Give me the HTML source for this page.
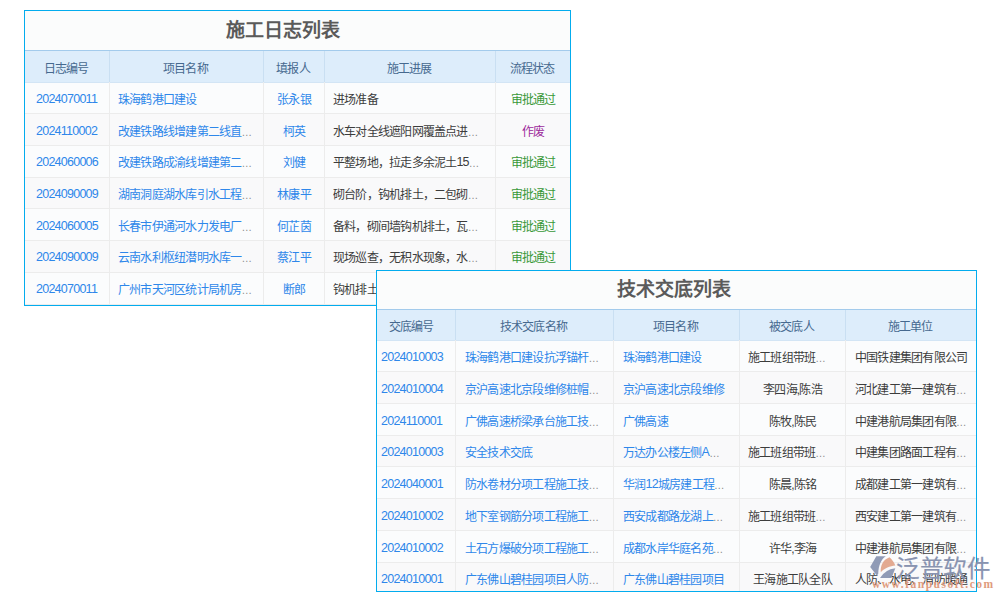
<!DOCTYPE html>
<html lang="zh-CN"><head><meta charset="utf-8">
<style>
html,body{margin:0;padding:0;background:#fff;width:1000px;height:600px;overflow:hidden;position:relative;font-family:"Liberation Sans",sans-serif}
.pn{position:absolute;border:1px solid #03acee;background:#fbfcfc}
.ttl{position:absolute;font-size:19px;font-weight:bold;color:#5a5a5a;white-space:nowrap;line-height:24px}
.hd{position:absolute;background:#ddedfb;border-top:1px solid #a3cbec;border-bottom:1px solid #d3e5f5;box-sizing:border-box}
.rw{position:absolute}
.hl{position:absolute;height:1px;background:#ececec}
.vh{position:absolute;width:1px;background:#c9dff2}
.vl{position:absolute;width:1px;background:#ececec}
.ht{position:absolute;font-size:12px;letter-spacing:-0.78px;color:#46698f;text-align:center;white-space:nowrap}
.ct{position:absolute;font-size:12px;letter-spacing:-0.78px;white-space:nowrap;overflow:hidden}
.e{font-size:10.5px;letter-spacing:0;color:#8c8c8c}
.d{font-size:12.5px;letter-spacing:-0.75px;position:relative;top:-1px}
.wmt{position:absolute;left:896px;top:551.5px;font-size:23.5px;font-weight:500;letter-spacing:0.6px;line-height:34px;color:#8893b0;-webkit-text-stroke:0.2px #8893b0;white-space:nowrap;opacity:1}
.wmu{position:absolute;left:872px;top:576px;font-family:"Liberation Serif",serif;font-weight:bold;font-size:11.5px;line-height:16px;letter-spacing:1.5px;color:#e09b7d;white-space:nowrap;opacity:1}
</style></head><body>
<div id="w1">
<div class="pn" style="left:24px;top:10px;width:545px;height:294px"></div>
<div class="ttl" style="left:225.5px;top:18.5px">施工日志列表</div>
<div class="hd" style="left:25px;top:50px;width:545px;height:33px"></div>
<div class="rw" style="left:25px;top:82.60px;width:545px;height:31.72px;background:#fbfcfd"></div>
<div class="rw" style="left:25px;top:114.32px;width:545px;height:31.72px;background:#f9f9fa"></div>
<div class="rw" style="left:25px;top:146.04px;width:545px;height:31.72px;background:#fbfcfd"></div>
<div class="rw" style="left:25px;top:177.76px;width:545px;height:31.72px;background:#f9f9fa"></div>
<div class="rw" style="left:25px;top:209.48px;width:545px;height:31.72px;background:#fbfcfd"></div>
<div class="rw" style="left:25px;top:241.20px;width:545px;height:31.72px;background:#f9f9fa"></div>
<div class="rw" style="left:25px;top:272.92px;width:545px;height:31.72px;background:#fbfcfd"></div>
<div class="hl" style="left:25px;top:113.32px;width:545px"></div>
<div class="hl" style="left:25px;top:145.04px;width:545px"></div>
<div class="hl" style="left:25px;top:176.76px;width:545px"></div>
<div class="hl" style="left:25px;top:208.48px;width:545px"></div>
<div class="hl" style="left:25px;top:240.20px;width:545px"></div>
<div class="hl" style="left:25px;top:271.92px;width:545px"></div>
<div class="hl" style="left:25px;top:303.64px;width:545px"></div>
<div class="vh" style="left:109px;top:51px;height:32px"></div>
<div class="vl" style="left:109px;top:82px;height:223px"></div>
<div class="vh" style="left:263px;top:51px;height:32px"></div>
<div class="vl" style="left:263px;top:82px;height:223px"></div>
<div class="vh" style="left:324px;top:51px;height:32px"></div>
<div class="vl" style="left:324px;top:82px;height:223px"></div>
<div class="vh" style="left:495px;top:51px;height:32px"></div>
<div class="vl" style="left:495px;top:82px;height:223px"></div>
<div class="ht" style="left:24px;top:52.5px;width:84px;height:32px;line-height:32px">日志编号</div>
<div class="ht" style="left:109px;top:52.5px;width:153px;height:32px;line-height:32px">项目名称</div>
<div class="ht" style="left:263px;top:52.5px;width:60px;height:32px;line-height:32px">填报人</div>
<div class="ht" style="left:324px;top:52.5px;width:170px;height:32px;line-height:32px">施工进展</div>
<div class="ht" style="left:495px;top:52.5px;width:74px;height:32px;line-height:32px">流程状态</div>
<div class="ct" style="left:36px;width:73px;text-align:left;top:84.80px;height:31.72px;line-height:31.72px;color:#2e87ea"><span class="d">2024070011</span></div>
<div class="ct" style="left:118px;width:145px;text-align:left;top:84.80px;height:31.72px;line-height:31.72px;color:#2e87ea">珠海鹤港口建设</div>
<div class="ct" style="left:264px;width:60px;text-align:center;top:84.80px;height:31.72px;line-height:31.72px;color:#2e87ea">张永银</div>
<div class="ct" style="left:333px;width:162px;text-align:left;top:84.80px;height:31.72px;line-height:31.72px;color:#3c3c3c">进场准备</div>
<div class="ct" style="left:496px;width:74px;text-align:center;top:84.80px;height:31.72px;line-height:31.72px;color:#389838">审批通过</div>
<div class="ct" style="left:36px;width:73px;text-align:left;top:116.52px;height:31.72px;line-height:31.72px;color:#2e87ea"><span class="d">2024110002</span></div>
<div class="ct" style="left:118px;width:145px;text-align:left;top:116.52px;height:31.72px;line-height:31.72px;color:#2e87ea">改建铁路线增建第二线直<span class="e">…</span></div>
<div class="ct" style="left:264px;width:60px;text-align:center;top:116.52px;height:31.72px;line-height:31.72px;color:#2e87ea">柯英</div>
<div class="ct" style="left:333px;width:162px;text-align:left;top:116.52px;height:31.72px;line-height:31.72px;color:#3c3c3c">水车对全线遮阳网覆盖点进<span class="e">…</span></div>
<div class="ct" style="left:496px;width:74px;text-align:center;top:116.52px;height:31.72px;line-height:31.72px;color:#9c2a9c">作废</div>
<div class="ct" style="left:36px;width:73px;text-align:left;top:148.24px;height:31.72px;line-height:31.72px;color:#2e87ea"><span class="d">2024060006</span></div>
<div class="ct" style="left:118px;width:145px;text-align:left;top:148.24px;height:31.72px;line-height:31.72px;color:#2e87ea">改建铁路成渝线增建第二<span class="e">…</span></div>
<div class="ct" style="left:264px;width:60px;text-align:center;top:148.24px;height:31.72px;line-height:31.72px;color:#2e87ea">刘健</div>
<div class="ct" style="left:333px;width:162px;text-align:left;top:148.24px;height:31.72px;line-height:31.72px;color:#3c3c3c">平整场地，拉走多余泥土<span class="d">15</span><span class="e">…</span></div>
<div class="ct" style="left:496px;width:74px;text-align:center;top:148.24px;height:31.72px;line-height:31.72px;color:#389838">审批通过</div>
<div class="ct" style="left:36px;width:73px;text-align:left;top:179.96px;height:31.72px;line-height:31.72px;color:#2e87ea"><span class="d">2024090009</span></div>
<div class="ct" style="left:118px;width:145px;text-align:left;top:179.96px;height:31.72px;line-height:31.72px;color:#2e87ea">湖南洞庭湖水库引水工程<span class="e">…</span></div>
<div class="ct" style="left:264px;width:60px;text-align:center;top:179.96px;height:31.72px;line-height:31.72px;color:#2e87ea">林康平</div>
<div class="ct" style="left:333px;width:162px;text-align:left;top:179.96px;height:31.72px;line-height:31.72px;color:#3c3c3c">砌台阶，钩机排土，二包砌<span class="e">…</span></div>
<div class="ct" style="left:496px;width:74px;text-align:center;top:179.96px;height:31.72px;line-height:31.72px;color:#389838">审批通过</div>
<div class="ct" style="left:36px;width:73px;text-align:left;top:211.68px;height:31.72px;line-height:31.72px;color:#2e87ea"><span class="d">2024060005</span></div>
<div class="ct" style="left:118px;width:145px;text-align:left;top:211.68px;height:31.72px;line-height:31.72px;color:#2e87ea">长春市伊通河水力发电厂<span class="e">…</span></div>
<div class="ct" style="left:264px;width:60px;text-align:center;top:211.68px;height:31.72px;line-height:31.72px;color:#2e87ea">何芷茵</div>
<div class="ct" style="left:333px;width:162px;text-align:left;top:211.68px;height:31.72px;line-height:31.72px;color:#3c3c3c">备料，砌间墙钩机排土，瓦<span class="e">…</span></div>
<div class="ct" style="left:496px;width:74px;text-align:center;top:211.68px;height:31.72px;line-height:31.72px;color:#389838">审批通过</div>
<div class="ct" style="left:36px;width:73px;text-align:left;top:243.40px;height:31.72px;line-height:31.72px;color:#2e87ea"><span class="d">2024090009</span></div>
<div class="ct" style="left:118px;width:145px;text-align:left;top:243.40px;height:31.72px;line-height:31.72px;color:#2e87ea">云南水利枢纽潜明水库一<span class="e">…</span></div>
<div class="ct" style="left:264px;width:60px;text-align:center;top:243.40px;height:31.72px;line-height:31.72px;color:#2e87ea">蔡江平</div>
<div class="ct" style="left:333px;width:162px;text-align:left;top:243.40px;height:31.72px;line-height:31.72px;color:#3c3c3c">现场巡查，无积水现象，水<span class="e">…</span></div>
<div class="ct" style="left:496px;width:74px;text-align:center;top:243.40px;height:31.72px;line-height:31.72px;color:#389838">审批通过</div>
<div class="ct" style="left:36px;width:73px;text-align:left;top:275.12px;height:31.72px;line-height:31.72px;color:#2e87ea"><span class="d">2024070011</span></div>
<div class="ct" style="left:118px;width:145px;text-align:left;top:275.12px;height:31.72px;line-height:31.72px;color:#2e87ea">广州市天河区统计局机房<span class="e">…</span></div>
<div class="ct" style="left:264px;width:60px;text-align:center;top:275.12px;height:31.72px;line-height:31.72px;color:#2e87ea">断郎</div>
<div class="ct" style="left:333px;width:162px;text-align:left;top:275.12px;height:31.72px;line-height:31.72px;color:#3c3c3c">钩机排土，<span class="e">…</span></div>
<div class="ct" style="left:496px;width:74px;text-align:center;top:275.12px;height:31.72px;line-height:31.72px;color:#389838">审批通过</div>
</div>
<div id="w2">
<div class="pn" style="left:376px;top:270px;width:599px;height:320px"></div>
<div class="ttl" style="left:616.5px;top:277.5px">技术交底列表</div>
<div class="hd" style="left:377px;top:309px;width:599px;height:32px"></div>
<div class="rw" style="left:377px;top:340.60px;width:599px;height:31.72px;background:#fbfcfd"></div>
<div class="rw" style="left:377px;top:372.32px;width:599px;height:31.72px;background:#f9f9fa"></div>
<div class="rw" style="left:377px;top:404.04px;width:599px;height:31.72px;background:#fbfcfd"></div>
<div class="rw" style="left:377px;top:435.76px;width:599px;height:31.72px;background:#f9f9fa"></div>
<div class="rw" style="left:377px;top:467.48px;width:599px;height:31.72px;background:#fbfcfd"></div>
<div class="rw" style="left:377px;top:499.20px;width:599px;height:31.72px;background:#f9f9fa"></div>
<div class="rw" style="left:377px;top:530.92px;width:599px;height:31.72px;background:#fbfcfd"></div>
<div class="rw" style="left:377px;top:562.64px;width:599px;height:28.36px;background:#f9f9fa"></div>
<div class="hl" style="left:377px;top:371.32px;width:599px"></div>
<div class="hl" style="left:377px;top:403.04px;width:599px"></div>
<div class="hl" style="left:377px;top:434.76px;width:599px"></div>
<div class="hl" style="left:377px;top:466.48px;width:599px"></div>
<div class="hl" style="left:377px;top:498.20px;width:599px"></div>
<div class="hl" style="left:377px;top:529.92px;width:599px"></div>
<div class="hl" style="left:377px;top:561.64px;width:599px"></div>
<div class="vh" style="left:455px;top:310px;height:31px"></div>
<div class="vl" style="left:455px;top:340px;height:251px"></div>
<div class="vh" style="left:613px;top:310px;height:31px"></div>
<div class="vl" style="left:613px;top:340px;height:251px"></div>
<div class="vh" style="left:739px;top:310px;height:31px"></div>
<div class="vl" style="left:739px;top:340px;height:251px"></div>
<div class="vh" style="left:845px;top:310px;height:31px"></div>
<div class="vl" style="left:845px;top:340px;height:251px"></div>
<div class="ht" style="left:372px;top:311.5px;width:78px;height:31px;line-height:31px">交底编号</div>
<div class="ht" style="left:455px;top:311.5px;width:157px;height:31px;line-height:31px">技术交底名称</div>
<div class="ht" style="left:613px;top:311.5px;width:125px;height:31px;line-height:31px">项目名称</div>
<div class="ht" style="left:739px;top:311.5px;width:105px;height:31px;line-height:31px">被交底人</div>
<div class="ht" style="left:845px;top:311.5px;width:130px;height:31px;line-height:31px">施工单位</div>
<div class="ct" style="left:381px;width:74px;text-align:left;top:343.20px;height:31.72px;line-height:31.72px;color:#2e87ea"><span class="d">2024010003</span></div>
<div class="ct" style="left:465px;width:148px;text-align:left;top:343.20px;height:31.72px;line-height:31.72px;color:#2e87ea">珠海鹤港口建设抗浮锚杆<span class="e">…</span></div>
<div class="ct" style="left:623px;width:116px;text-align:left;top:343.20px;height:31.72px;line-height:31.72px;color:#2e87ea">珠海鹤港口建设</div>
<div class="ct" style="left:748px;width:97px;text-align:left;top:343.20px;height:31.72px;line-height:31.72px;color:#3c3c3c">施工班组带班<span class="e">…</span></div>
<div class="ct" style="left:855px;width:121px;text-align:left;top:343.20px;height:31.72px;line-height:31.72px;color:#3c3c3c">中国铁建集团有限公司</div>
<div class="ct" style="left:381px;width:74px;text-align:left;top:374.92px;height:31.72px;line-height:31.72px;color:#2e87ea"><span class="d">2024010004</span></div>
<div class="ct" style="left:465px;width:148px;text-align:left;top:374.92px;height:31.72px;line-height:31.72px;color:#2e87ea">京沪高速北京段维修桩帽<span class="e">…</span></div>
<div class="ct" style="left:623px;width:116px;text-align:left;top:374.92px;height:31.72px;line-height:31.72px;color:#2e87ea">京沪高速北京段维修</div>
<div class="ct" style="left:740px;width:105px;text-align:center;top:374.92px;height:31.72px;line-height:31.72px;color:#3c3c3c">李四海,陈浩</div>
<div class="ct" style="left:855px;width:121px;text-align:left;top:374.92px;height:31.72px;line-height:31.72px;color:#3c3c3c">河北建工第一建筑有<span class="e">…</span></div>
<div class="ct" style="left:381px;width:74px;text-align:left;top:406.64px;height:31.72px;line-height:31.72px;color:#2e87ea"><span class="d">2024110001</span></div>
<div class="ct" style="left:465px;width:148px;text-align:left;top:406.64px;height:31.72px;line-height:31.72px;color:#2e87ea">广佛高速桥梁承台施工技<span class="e">…</span></div>
<div class="ct" style="left:623px;width:116px;text-align:left;top:406.64px;height:31.72px;line-height:31.72px;color:#2e87ea">广佛高速</div>
<div class="ct" style="left:740px;width:105px;text-align:center;top:406.64px;height:31.72px;line-height:31.72px;color:#3c3c3c">陈牧,陈民</div>
<div class="ct" style="left:855px;width:121px;text-align:left;top:406.64px;height:31.72px;line-height:31.72px;color:#3c3c3c">中建港航局集团有限<span class="e">…</span></div>
<div class="ct" style="left:381px;width:74px;text-align:left;top:438.36px;height:31.72px;line-height:31.72px;color:#2e87ea"><span class="d">2024010003</span></div>
<div class="ct" style="left:465px;width:148px;text-align:left;top:438.36px;height:31.72px;line-height:31.72px;color:#2e87ea">安全技术交底</div>
<div class="ct" style="left:623px;width:116px;text-align:left;top:438.36px;height:31.72px;line-height:31.72px;color:#2e87ea">万达办公楼左侧<span class="d">A</span><span class="e">…</span></div>
<div class="ct" style="left:748px;width:97px;text-align:left;top:438.36px;height:31.72px;line-height:31.72px;color:#3c3c3c">施工班组带班<span class="e">…</span></div>
<div class="ct" style="left:855px;width:121px;text-align:left;top:438.36px;height:31.72px;line-height:31.72px;color:#3c3c3c">中建集团路面工程有<span class="e">…</span></div>
<div class="ct" style="left:381px;width:74px;text-align:left;top:470.08px;height:31.72px;line-height:31.72px;color:#2e87ea"><span class="d">2024040001</span></div>
<div class="ct" style="left:465px;width:148px;text-align:left;top:470.08px;height:31.72px;line-height:31.72px;color:#2e87ea">防水卷材分项工程施工技<span class="e">…</span></div>
<div class="ct" style="left:623px;width:116px;text-align:left;top:470.08px;height:31.72px;line-height:31.72px;color:#2e87ea">华润<span class="d">12</span>城房建工程<span class="e">…</span></div>
<div class="ct" style="left:740px;width:105px;text-align:center;top:470.08px;height:31.72px;line-height:31.72px;color:#3c3c3c">陈晨,陈铭</div>
<div class="ct" style="left:855px;width:121px;text-align:left;top:470.08px;height:31.72px;line-height:31.72px;color:#3c3c3c">成都建工第一建筑有<span class="e">…</span></div>
<div class="ct" style="left:381px;width:74px;text-align:left;top:501.80px;height:31.72px;line-height:31.72px;color:#2e87ea"><span class="d">2024010002</span></div>
<div class="ct" style="left:465px;width:148px;text-align:left;top:501.80px;height:31.72px;line-height:31.72px;color:#2e87ea">地下室钢筋分项工程施工<span class="e">…</span></div>
<div class="ct" style="left:623px;width:116px;text-align:left;top:501.80px;height:31.72px;line-height:31.72px;color:#2e87ea">西安成都路龙湖上<span class="e">…</span></div>
<div class="ct" style="left:748px;width:97px;text-align:left;top:501.80px;height:31.72px;line-height:31.72px;color:#3c3c3c">施工班组带班<span class="e">…</span></div>
<div class="ct" style="left:855px;width:121px;text-align:left;top:501.80px;height:31.72px;line-height:31.72px;color:#3c3c3c">西安建工第一建筑有<span class="e">…</span></div>
<div class="ct" style="left:381px;width:74px;text-align:left;top:533.52px;height:31.72px;line-height:31.72px;color:#2e87ea"><span class="d">2024010002</span></div>
<div class="ct" style="left:465px;width:148px;text-align:left;top:533.52px;height:31.72px;line-height:31.72px;color:#2e87ea">土石方爆破分项工程施工<span class="e">…</span></div>
<div class="ct" style="left:623px;width:116px;text-align:left;top:533.52px;height:31.72px;line-height:31.72px;color:#2e87ea">成都水岸华庭名苑<span class="e">…</span></div>
<div class="ct" style="left:740px;width:105px;text-align:center;top:533.52px;height:31.72px;line-height:31.72px;color:#3c3c3c">许华,李海</div>
<div class="ct" style="left:855px;width:121px;text-align:left;top:533.52px;height:31.72px;line-height:31.72px;color:#3c3c3c">中建港航局集团有限<span class="e">…</span></div>
<div class="ct" style="left:381px;width:74px;text-align:left;top:565.24px;height:31.72px;line-height:31.72px;color:#2e87ea"><span class="d">2024010001</span></div>
<div class="ct" style="left:465px;width:148px;text-align:left;top:565.24px;height:31.72px;line-height:31.72px;color:#2e87ea">广东佛山碧桂园项目人防<span class="e">…</span></div>
<div class="ct" style="left:623px;width:116px;text-align:left;top:565.24px;height:31.72px;line-height:31.72px;color:#2e87ea">广东佛山碧桂园项目</div>
<div class="ct" style="left:740px;width:105px;text-align:center;top:565.24px;height:31.72px;line-height:31.72px;color:#3c3c3c">王海施工队全队</div>
<div class="ct" style="left:855px;width:121px;text-align:left;top:565.24px;height:31.72px;line-height:31.72px;color:#3c3c3c">人防、水电、消防暖通</div>
</div>

<svg style="position:absolute;left:0;top:0" width="1000" height="600" viewBox="0 0 1000 600">
<g opacity="0.95">
<path d="M876.3,556.3 L885.8,556.3 C881,559.5 878.6,565 878.2,574 L876.8,575.6 L870.2,567 Z" fill="#8b96b3"/>
<path d="M880.8,572.3 C880.4,566 882.5,559.8 889.5,557.2 C892,559.5 894,562 895.3,565.5 C890,566 884.5,568 880.8,572.3 Z" fill="#e2a68c"/>
<path d="M880,578 L891.5,578 L895.3,568.2 Q885,569.5 880,578 Z" fill="#8b96b3"/>
</g>
</svg>
<div class="wmt">泛普软件</div>
<div class="wmu">www.fanpusoft.com</div>
</body></html>
